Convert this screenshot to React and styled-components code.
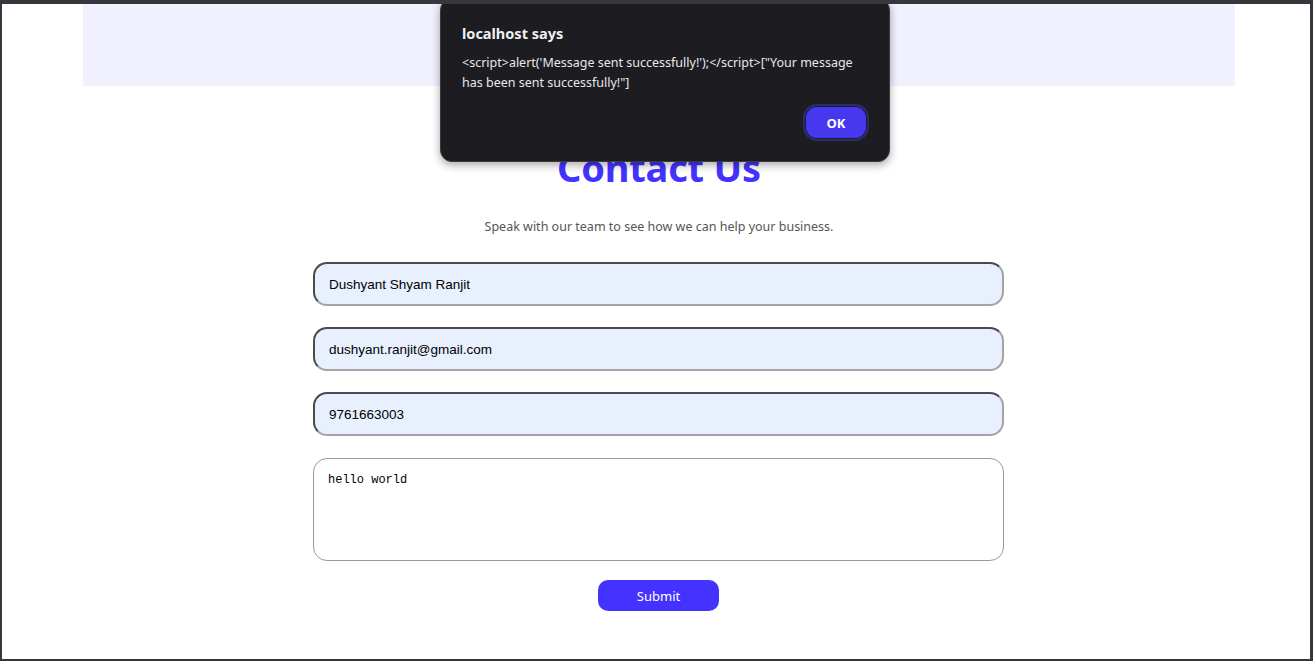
import React from 'react'
import styled, { createGlobalStyle } from 'styled-components'

const GlobalStyle = createGlobalStyle`
  html, body {
    margin: 0;
    padding: 0;
    background: #36373c;
  }
  * {
    box-sizing: border-box;
  }
`

const Frame = styled.div`
  position: relative;
  width: 1313px;
  height: 661px;
  border-style: solid;
  border-color: #36373c;
  border-width: 4px 3px 2px 2px;
  background: #ffffff;
  overflow: hidden;
`

const Page = styled.main`
  padding: 0 75px 0 81px;
  font-family: 'Noto Sans', 'Open Sans', sans-serif;
`

const Banner = styled.div`
  height: 82px;
  background: #f0f0fe;
`

const Section = styled.section`
  display: flex;
  flex-direction: column;
  align-items: center;
  padding-top: 57px;
`

const Heading = styled.h1`
  margin: 0;
  height: 48px;
  line-height: 48px;
  font-size: 38px;
  font-weight: 700;
  color: #4433ff;
  letter-spacing: -0.2px;
`

const Subtitle = styled.p`
  margin: 27px 0 0;
  height: 18px;
  line-height: 18px;
  font-size: 12.5px;
  color: #555555;
`

const Form = styled.form`
  display: flex;
  flex-direction: column;
  align-items: center;
  gap: 21px;
  width: 691px;
  margin: 26px 1px 0 0;
`

const Field = styled.input`
  width: 100%;
  height: 44px;
  padding: 0 14px;
  border-width: 2px;
  border-style: solid;
  border-color: #4a4a4f #a3a3a8 #a3a3a8 #4a4a4f;
  border-radius: 14px;
  background: #e8f0fe;
  font-family: 'Liberation Sans', Arial, sans-serif;
  font-size: 13.5px;
  color: #000000;
  outline: none;
`

const Message = styled.textarea`
  width: 100%;
  height: 103px;
  margin-top: 1px;
  padding: 14px 14px;
  border: 1px solid #9a9a9a;
  border-radius: 14px;
  background: #ffffff;
  font-family: 'Liberation Mono', 'DejaVu Sans Mono', monospace;
  font-size: 12px;
  color: #000000;
  resize: none;
  outline: none;
`

const SubmitButton = styled.button`
  width: 121px;
  height: 31px;
  margin-top: -2px;
  border: none;
  border-radius: 10px;
  background: #4433ff;
  color: #ffffff;
  font-family: 'Noto Sans', 'Open Sans', sans-serif;
  font-size: 13px;
  cursor: pointer;
`

const Dialog = styled.div`
  position: absolute;
  top: -6px;
  left: 438px;
  width: 450px;
  height: 164px;
  padding: 24px 20px 0 21px;
  background: #1d1c21;
  border: 1px solid #3a3a40;
  border-radius: 12px;
  box-shadow: 0 3px 8px rgba(0, 0, 0, 0.35);
  font-family: 'Noto Sans', 'Open Sans', sans-serif;
  color: #e8e8ea;
`

const DialogTitle = styled.div`
  font-size: 14.5px;
  font-weight: 700;
  line-height: 20px;
  color: #f0f0f2;
`

const DialogText = styled.div`
  margin-top: 10px;
  font-size: 12.5px;
  line-height: 20px;
  width: 400px;
`

const DialogActions = styled.div`
  display: flex;
  justify-content: flex-end;
  margin-top: 11px;
`

const OkButton = styled.button`
  width: 66px;
  height: 37px;
  border: 2px solid #2b2a6a;
  border-radius: 14px;
  padding: 0;
  background: #4638ef;
  box-shadow: inset 0 0 0 1px #1d1c21;
  color: #ffffff;
  font-family: 'Noto Sans', 'Open Sans', sans-serif;
  font-size: 13px;
  font-weight: 700;
`

const App = () => (
  <>
    <GlobalStyle />
    <Frame>
      <Page>
        <Banner />
        <Section>
          <Heading>Contact Us</Heading>
          <Subtitle>Speak with our team to see how we can help your business.</Subtitle>
          <Form onSubmit={(e) => e.preventDefault()}>
            <Field type="text" defaultValue="Dushyant Shyam Ranjit" />
            <Field type="email" defaultValue="dushyant.ranjit@gmail.com" />
            <Field type="tel" defaultValue="9761663003" />
            <Message defaultValue="hello world" />
            <SubmitButton type="submit">Submit</SubmitButton>
          </Form>
        </Section>
      </Page>
      <Dialog role="alertdialog">
        <DialogTitle>localhost says</DialogTitle>
        <DialogText>
          &lt;script&gt;alert('Message sent successfully!');&lt;/script&gt;["Your message has been sent successfully!"]
        </DialogText>
        <DialogActions>
          <OkButton type="button">OK</OkButton>
        </DialogActions>
      </Dialog>
    </Frame>
  </>
)

export default App
